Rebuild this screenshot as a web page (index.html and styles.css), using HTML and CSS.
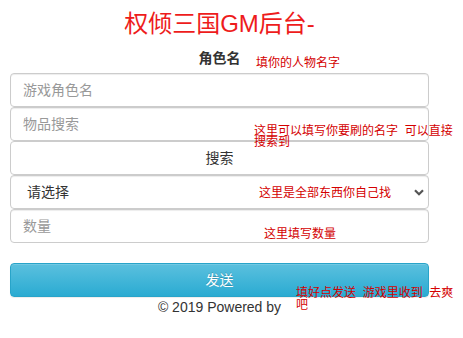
FILE: index.html
```html
<!DOCTYPE html>
<html lang="zh-CN">
<head>
<meta charset="utf-8">
<title>权倾三国GM后台</title>
<link rel="stylesheet" href="styles.css">
</head>
<body>
<div class="wrap">
  <h1 class="title">权倾三国GM后台-</h1>
  <div class="row label-row">
    <label class="label">角色名</label>
    <span class="note note-1">填你的人物名字</span>
  </div>
  <div class="row">
    <input class="field" type="text" placeholder="游戏角色名">
  </div>
  <div class="row">
    <input class="field" type="text" placeholder="物品搜索">
    <span class="note note-2">这里可以填写你要刷的名字&nbsp;&nbsp;可以直接搜索到</span>
  </div>
  <div class="row">
    <button class="field btn-search" type="button">搜索</button>
  </div>
  <div class="row">
    <select class="field select">
      <option>请选择</option>
    </select>
    <svg class="chev" width="10" height="7" viewBox="0 0 10 7"><path d="M1 1.2 L5 5.2 L9 1.2" fill="none" stroke="#555" stroke-width="2.2"/></svg>
    <span class="note note-3">这里是全部东西你自己找</span>
  </div>
  <div class="row">
    <input class="field" type="text" placeholder="数量">
    <span class="note note-4">这里填写数量</span>
  </div>
  <div class="row send-row">
    <button class="btn-send" type="button">发送</button>
    <span class="note note-5">填好点发送&nbsp;&nbsp;游戏里收到&nbsp;&nbsp;去爽吧</span>
  </div>
  <p class="footer">© 2019 Powered by</p>
</div>
</body>
</html>
```
FILE: styles.css
```css
html, body {
  margin: 0;
  padding: 0;
  background: #fff;
}
body {
  font-family: "Liberation Sans", "Noto Sans CJK SC", sans-serif;
  font-size: 14px;
  color: #333;
}
.wrap {
  width: 419px;
  padding: 10px 0 0 10px;
}
.title {
  margin: 0 0 10px;
  font-size: 24px;
  line-height: 28px;
  font-weight: normal;
  color: #ee1c1c;
  text-align: center;
}
.row {
  position: relative;
}
.label-row {
  text-align: center;
  height: 20px;
  margin-bottom: 5px;
}
.label {
  font-weight: bold;
  font-size: 14px;
  line-height: 20px;
}
.field {
  display: block;
  box-sizing: border-box;
  width: 100%;
  height: 34px;
  margin: 0;
  padding: 6px 12px;
  font-family: "Liberation Sans", "Noto Sans CJK SC", sans-serif;
  font-size: 14px;
  line-height: 20px;
  color: #555;
  background: #fff;
  border: 1px solid #ccc;
  border-radius: 4px;
  box-shadow: inset 0 1px 1px rgba(0,0,0,.075);
  outline: none;
}
.field::placeholder {
  color: #999;
}
.btn-search {
  text-align: center;
  color: #333;
  box-shadow: none;
  cursor: pointer;
}
.select {
  -webkit-appearance: none;
  appearance: none;
  padding-left: 16px;
  color: #333;
}
.chev {
  position: absolute;
  left: 404px;
  top: 14px;
  pointer-events: none;
}
.send-row {
  margin-top: 20px;
}
.btn-send {
  display: block;
  box-sizing: border-box;
  width: 100%;
  height: 34px;
  padding: 6px 12px;
  font-family: "Liberation Sans", "Noto Sans CJK SC", sans-serif;
  font-size: 14px;
  line-height: 20px;
  color: #fff;
  text-shadow: 0 -1px 0 rgba(0,0,0,.2);
  background: linear-gradient(to bottom, #5bc0de 0, #2aabd2 100%);
  border: 1px solid #28a4c9;
  border-radius: 4px;
  box-shadow: inset 0 1px 0 rgba(255,255,255,.15), 0 1px 1px rgba(0,0,0,.075);
}
.footer {
  margin: 0;
  text-align: center;
  line-height: 20px;
  color: #333;
}
.note {
  position: absolute;
  z-index: 5;
  font-size: 12px;
  line-height: 12px;
  color: #d40000;
  white-space: normal;
}
.note-1 { left: 246px; top: 9px; text-align: left; }
.note-2 { left: 244px; top: 19px; width: 202px; line-height: 11px; }
.note-3 { left: 249px; top: 12px; }
.note-4 { left: 254px; top: 19px; }
.note-5 { left: 286px; top: 24px; width: 159px; }
```
